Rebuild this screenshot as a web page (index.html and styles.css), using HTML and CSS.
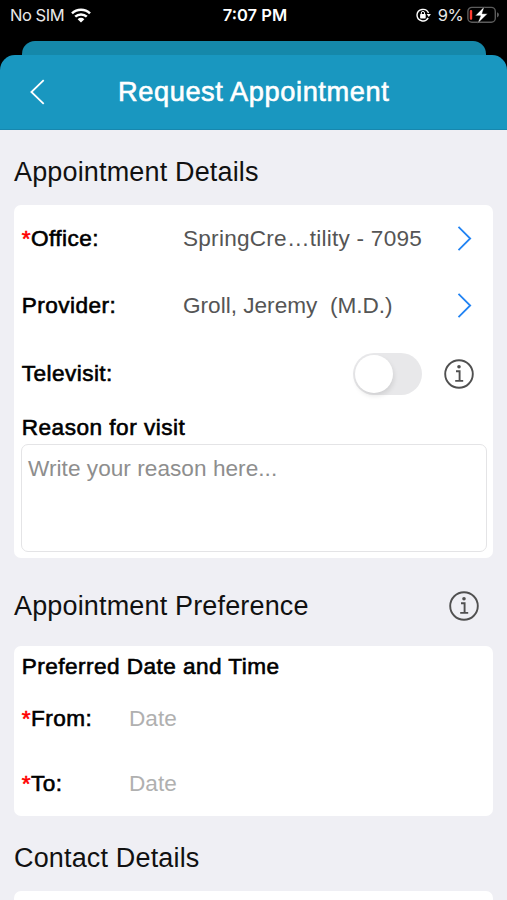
FILE: index.html
```html
<!DOCTYPE html>
<html lang="en">
<head>
<meta charset="utf-8">
<title>Request Appointment</title>
<link rel="stylesheet" href="styles.css">
</head>
<body>
<div class="status">
  <div class="status-side">
    <span class="carrier">No SIM</span>
    <svg class="wifi" width="20" height="15" viewBox="0 0 20 15" fill="none" stroke="#fff" stroke-width="2.5"><path d="M1 5.4C6 .6 14 .6 19 5.4M4.2 8.7c3.3-3.1 8.3-3.1 11.6 0"/><path d="M6.6 11.2c2-1.8 4.8-1.8 6.8 0L10 14.5z" fill="#fff" stroke="none"/></svg>
  </div>
  <span class="clock">7:07 PM</span>
  <div class="status-side status-right">
    <svg width="15" height="14" viewBox="0 0 15 14" fill="none" stroke="#fff"><path d="M12.5 5A6 6 0 0 0 1 7a6 6 0 0 0 11.2 2.9" stroke-width="1.4"/><path d="M10.7 6h4.2l-2.1 3z" fill="#fff" stroke="none"/><rect x="4.1" y="6.1" width="5.6" height="4.3" rx=".6" fill="#fff" stroke="none"/><path d="M5.3 6.4V5a1.6 1.6 0 0 1 3.2 0v1.4" stroke-width="1"/></svg>
    <span class="percent">9%</span>
    <svg width="33" height="18" viewBox="0 0 33 18"><rect x=".9" y="1.4" width="27.4" height="14.8" rx="4" fill="none" stroke="#5c5c5c" stroke-width="1.4"/><path d="M30 6.2q2 .7 2 2.6t-2 2.6z" fill="#5c5c5c"/><rect x="2.8" y="4" width="2.4" height="9.7" rx="1" fill="#ff3b30"/><path d="M17.4.5 8.2 9.8h5.4l-3 7.8 10-9.9h-5.5z" fill="#fff" stroke="#000" stroke-width=".4"/></svg>
  </div>
</div>
<div class="sheet-behind"></div>
<header class="header">
  <svg class="back" width="16" height="26" viewBox="0 0 16 26" fill="none" stroke="#fff" stroke-width="1.8"><path d="M13.7 1.2 1.4 13l12.3 11.8"/></svg>
  <h1>Request Appointment</h1>
</header>
<main>
  <h2 class="details-title">Appointment Details</h2>
  <section class="card details">
    <div class="row">
      <span class="label"><span class="req">*</span>Office:</span>
      <span class="value office">SpringCre…tility - 7095</span>
      <svg class="chevron" width="16" height="26" viewBox="0 0 16 26"><path d="m1.5 .8 11.7 11.7L1.5 24.2"/></svg>
    </div>
    <div class="row">
      <span class="label">Provider:</span>
      <span class="value">Groll, Jeremy&nbsp; (M.D.)</span>
      <svg class="chevron" width="16" height="26" viewBox="0 0 16 26"><path d="m1.5 .8 11.7 11.7L1.5 24.2"/></svg>
    </div>
    <div class="row">
      <span class="label">Televisit:</span>
      <span class="toggle"><span class="knob"></span></span>
      <svg class="info" width="30" height="30" viewBox="0 0 30 30"><circle cx="15" cy="15" r="13.8"/><path d="M12 12.3h3.6v9.5M11.2 21.9h8"/><circle class="dot" cx="15" cy="7.8" r="1.8"/></svg>
    </div>
    <div class="label reason-label">Reason for visit</div>
    <div class="reason">Write your reason here...</div>
  </section>
  <div class="pref-head">
    <h2>Appointment Preference</h2>
    <svg class="info" width="30" height="30" viewBox="0 0 30 30"><circle cx="15" cy="15" r="13.8"/><path d="M12 12.3h3.6v9.5M11.2 21.9h8"/><circle class="dot" cx="15" cy="7.8" r="1.8"/></svg>
  </div>
  <section class="card preference">
    <div class="label pref-label">Preferred Date and Time</div>
    <div class="date-row"><span class="label"><span class="req">*</span>From:</span><span class="date">Date</span></div>
    <div class="date-row"><span class="label"><span class="req">*</span>To:</span><span class="date">Date</span></div>
  </section>
  <h2 class="contact-title">Contact Details</h2>
  <section class="card contact"></section>
</main>
</body>
</html>
```

FILE: styles.css
```css
* { box-sizing: border-box; }
body {
  margin: 0;
  height: 900px;
  overflow: hidden;
  background: #000;
  color: #111;
  font-family: "Liberation Sans", Arial, sans-serif;
  font-size: 22.6px;
  display: flex;
  flex-direction: column;
}
svg { display: block; flex: none; }
.status {
  height: 41px;
  flex: none;
  padding: 0 7px 11px 10px;
  display: grid;
  grid-template-columns: 1fr auto 1fr;
  align-items: center;
  color: #fff;
  font: 16.5px/20px Inter, sans-serif;
}
.status-side { display: flex; align-items: center; gap: 7px; }
.status-right { justify-content: flex-end; gap: 7px; }
.carrier { color: #e8e8e8; letter-spacing: -.45px; }
.clock { font-weight: 600; letter-spacing: 0; }
.percent { color: #e8e8e8; margin-right: -3px; letter-spacing: -.6px; }
.sheet-behind {
  flex: none;
  height: 14px;
  margin: 0 21px 0 22px;
  border-radius: 13px 13px 0 0;
  background: #1588aa;
}
.header {
  flex: none;
  height: 75px;
  border-radius: 15px 15px 0 0;
  background: #1997c0;
  border-bottom: 1px solid #1787ae;
  display: grid;
  grid-template-columns: 118px 1fr;
  align-items: center;
  color: #fff;
}
.back { margin-left: 30px; }
h1 {
  margin: 0;
  font-size: 27.2px;
  line-height: 32px;
  font-weight: 400;
  letter-spacing: .6px;
  -webkit-text-stroke: .6px #fff;
  white-space: nowrap;
}
main { flex: 1; background: #efeff4; padding: 0 14px; }
h2 {
  margin: 0;
  font-size: 27px;
  line-height: 32px;
  font-weight: 400;
  letter-spacing: .16px;
  white-space: nowrap;
}
.details-title { padding: 26px 0 17px; }
.card { background: #fff; border-radius: 7px; }
.details { height: 353px; padding: 0 6px 0 7px; }
.row {
  height: 67.6px;
  display: flex;
  align-items: center;
}
.row .label { width: 162px; }
.label {
  padding-left: .7px;
  color: #000;
  line-height: 28px;
  letter-spacing: .45px;
  -webkit-text-stroke: .6px currentColor;
  white-space: nowrap;
}
.req { color: #f00; -webkit-text-stroke: .6px #f00; }
.value { color: #555; white-space: nowrap; }
.office { letter-spacing: .24px; }
.chevron { margin-left: auto; margin-right: 14px; fill: none; stroke: #2183f3; stroke-width: 1.8; }
.toggle {
  width: 69px;
  height: 42px;
  margin-left: 170px;
  padding: 2px;
  border-radius: 21px;
  background: #e8e8ea;
}
.knob {
  display: block;
  width: 38px;
  height: 38px;
  border-radius: 50%;
  background: #fff;
  box-shadow: 1px 3px 5px rgba(0, 0, 0, .1);
}
.info { fill: none; stroke: #505050; stroke-width: 1.9; }
.info .dot { fill: #505050; stroke: none; }
.row .info { margin-left: 22px; }
.reason-label { height: 36px; padding-top: 6px; letter-spacing: .5px; }
.reason {
  height: 108px;
  padding: 10px 6px;
  border: 1.5px solid #e4e4e6;
  border-radius: 7px;
  line-height: 28px;
  letter-spacing: .04px;
  color: #8e8e8e;
}
.pref-head {
  height: 88px;
  padding: 8px 14px 0 0;
  display: flex;
  justify-content: space-between;
  align-items: center;
}
.preference { height: 170px; padding: 0 7px; }
.pref-label { height: 40px; padding-top: 7px; }
.date-row { height: 65px; display: flex; align-items: center; }
.date-row .label { width: 108px; }
.date { color: #b0b0b0; }
.contact-title { padding: 26px 0 17px; }
.contact { height: 40px; }
```
